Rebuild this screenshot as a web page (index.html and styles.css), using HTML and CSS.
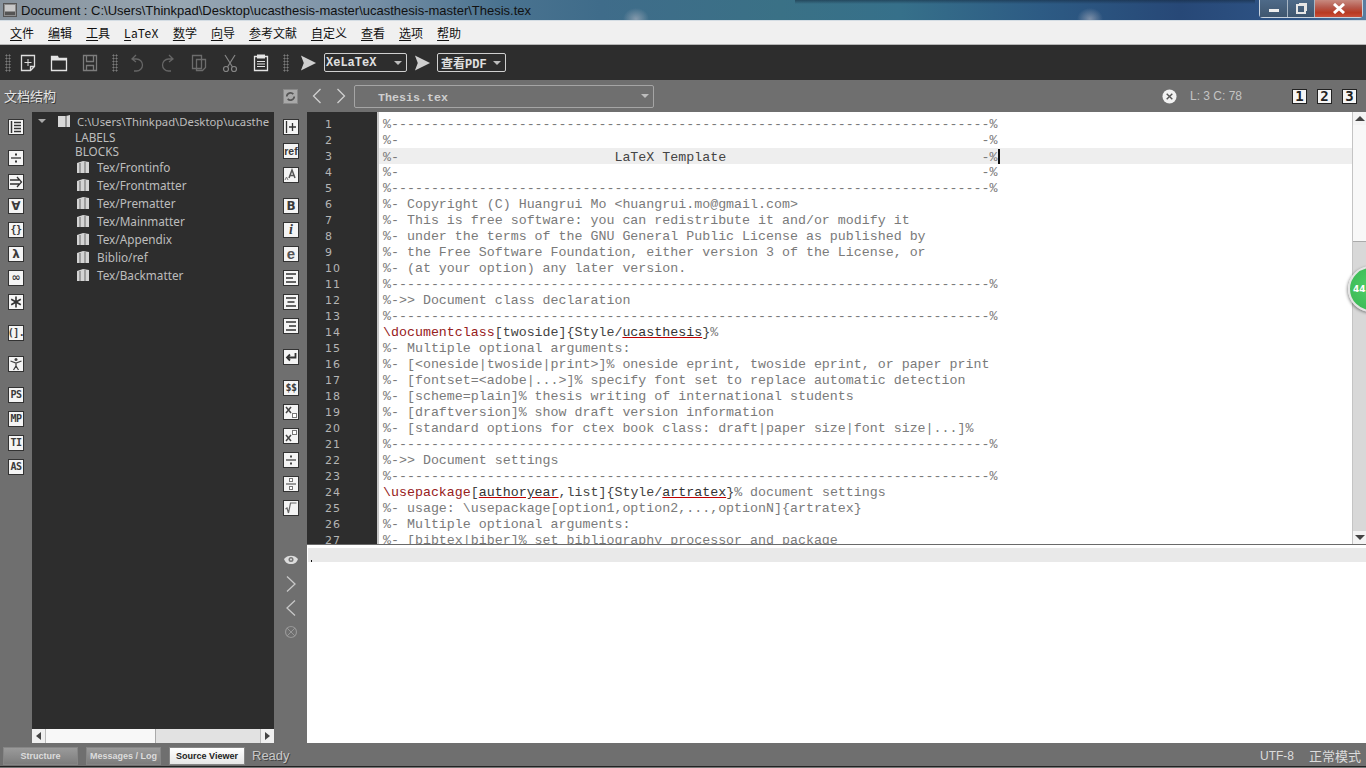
FILE: index.html
```html
<!DOCTYPE html>
<html>
<head>
    <title>Document : Thesis.tex</title>
    <meta charset="utf-8">
    <link rel="stylesheet" href="styles.css">
</head>
<body>
<div class="app">
    <div class="titlebar">
        <svg class="app-icon" width="14" height="14" viewBox="0 0 14 14"><rect x="0.5" y="0.5" width="13" height="13" fill="#8d8d8d" stroke="#555"/><rect x="2" y="2" width="10" height="6" fill="#c8c8c8"/><rect x="2" y="9" width="10" height="3" fill="#555"/></svg>
        <span class="title-text">Document : C:\Users\Thinkpad\Desktop\ucasthesis-master\ucasthesis-master\Thesis.tex</span>
        <div class="win-btns">
            <div class="win-btn win-min"><span class="min-bar"></span></div>
            <div class="win-btn win-max"><span class="max-box"></span></div>
            <div class="win-btn win-close">
                <svg width="14" height="11" viewBox="0 0 14 11"><path d="M2 1L12 10M12 1L2 10" stroke="#fff" stroke-width="3"/></svg>
            </div>
        </div>
    </div>

    <div class="menubar">
        <span class="menu-item"><u>文</u>件</span>
        <span class="menu-item"><u>编</u>辑</span>
        <span class="menu-item"><u>工</u>具</span>
        <span class="menu-item menu-latin"><u>L</u>aTeX</span>
        <span class="menu-item"><u>数</u>学</span>
        <span class="menu-item"><u>向</u>导</span>
        <span class="menu-item"><u>参</u>考文献</span>
        <span class="menu-item"><u>自</u>定义</span>
        <span class="menu-item"><u>查</u>看</span>
        <span class="menu-item"><u>选</u>项</span>
        <span class="menu-item"><u>帮</u>助</span>
    </div>

    <div class="toolbar">
        <span class="grip grip-first"></span>
        <svg class="tool" viewBox="0 0 20 20"><path d="M3.500 2.500h13v11l-4 4h-9z M12.500 17.500v-4h4" fill="none" stroke="#ddd" stroke-width="1.300"/><path d="M10 6v7M6.500 9.500h7" stroke="#ddd"/></svg>
        <svg class="tool" viewBox="0 0 20 20"><path d="M2.500 3.500h6l1 2h8v12h-15z" fill="none" stroke="#e4e4e4" stroke-width="1.300"/><path d="M2.500 3.500h6l1 2h8v2h-15z" fill="#e4e4e4"/></svg>
        <svg class="tool" viewBox="0 0 20 20"><path d="M3.500 2.500h13v15h-13z M6.500 2.500v6h7v-6 M6.500 17.500v-5h7v5" fill="none" stroke="#7c7c7c" stroke-width="1.300"/></svg>
        <span class="grip"></span>
        <svg class="tool" viewBox="0 0 20 20"><path d="M9 2L5 6l4 3M5 6h4.500a5 5 0 0 1 0 12H7" fill="none" stroke="#666" stroke-width="1.300"/></svg>
        <svg class="tool" viewBox="0 0 20 20"><path d="M11 2l4 4-4 3M15 6h-4.500a5 5 0 0 0 0 12H13" fill="none" stroke="#666" stroke-width="1.300"/></svg>
        <svg class="tool" viewBox="0 0 20 20"><path d="M3.500 2.500h9v13h-9z M7.500 6.500h9v8l-3 3h-6z" fill="none" stroke="#6c6c6c" stroke-width="1.300"/></svg>
        <svg class="tool" viewBox="0 0 20 20"><circle cx="6" cy="16" r="2.500" fill="none" stroke="#858585" stroke-width="1.200"/><circle cx="14" cy="16" r="2.500" fill="none" stroke="#858585" stroke-width="1.200"/><path d="M5 2l7.500 12M15 2L7.500 14" stroke="#858585" stroke-width="1.200"/></svg>
        <svg class="tool" viewBox="0 0 20 20"><path d="M3.500 3.500h13v14h-13z" fill="none" stroke="#e4e4e4" stroke-width="1.300"/><rect x="6" y="1.500" width="8" height="4" fill="#e4e4e4"/><path d="M6 8.500h8M6 11h8M6 13.500h8" stroke="#e4e4e4"/></svg>
        <span class="grip"></span>
        <svg class="run-arrow" viewBox="0 0 18 16"><path d="M1 0l16 8-16 8 3-8z" fill="#cfcfcf"/></svg>
        <div class="combo combo-compile"><span>XeLaTeX</span><i class="combo-arrow"></i></div>
        <svg class="run-arrow" viewBox="0 0 18 16"><path d="M1 0l16 8-16 8 3-8z" fill="#cfcfcf"/></svg>
        <div class="combo combo-view"><span>查看PDF</span><i class="combo-arrow"></i></div>
    </div>

    <div class="main">
        <div class="structure">
            <div class="panel-head">文档结构</div>
            <div class="structure-body">
                <div class="side-rail">
                    <div class="icon-col">
                        <div class="ibox gap-b"><svg viewBox="0 0 14 14"><path d="M2.500 1v12" stroke="#333" stroke-width="1.500"/><path d="M5 2.500h7M5 5.500h7M5 8.500h7M5 11.500h7" stroke="#333" stroke-width="1.500"/></svg></div>
                        <div class="ibox"><svg viewBox="0 0 14 14"><path d="M2 7h10" stroke="#333" stroke-width="1.300"/><rect x="6" y="2.500" width="2" height="2" fill="#333"/><rect x="6" y="9.500" width="2" height="2" fill="#333"/></svg></div>
                        <div class="ibox"><svg viewBox="0 0 14 14"><path d="M1 5h9M1 9h9M8 2l4.500 5L8 12" fill="none" stroke="#333" stroke-width="1.300"/></svg></div>
                        <div class="ibox sym">∀</div>
                        <div class="ibox sym small">{}</div>
                        <div class="ibox sym">λ</div>
                        <div class="ibox sym wide">∞</div>
                        <div class="ibox"><svg viewBox="0 0 14 14"><path d="M7 1.500v11M2.200 4.200l9.600 5.600M11.800 4.200l-9.600 5.600" stroke="#333" stroke-width="1.600"/></svg></div>
                        <div class="ibox sym small gap-t">(].</div>
                        <div class="ibox gap-t"><svg viewBox="0 0 14 14"><circle cx="7" cy="2.500" r="1.500" fill="#444"/><path d="M1.500 4l5.500 2 5.500-2M7 6v3M7 9l-2.500 4M7 9l2.500 4" fill="none" stroke="#444" stroke-width="1.300"/></svg></div>
                        <div class="ibox sym small gap-t">PS</div>
                        <div class="ibox sym small">MP</div>
                        <div class="ibox sym small">TI</div>
                        <div class="ibox sym small">AS</div>
                    </div>
                </div>
                <div class="tree">
                    <div class="tree-body">
                        <div class="tree-root">
                            <i class="tree-arrow"></i>
                            <svg class="doc-icon" viewBox="0 0 14 14"><path d="M1 2h8l4-1v12H1z" fill="#d8d8d8"/><path d="M9 2v11" stroke="#555"/></svg>
                            <span class="root-path">C:\Users\Thinkpad\Desktop\ucasthe</span>
                        </div>
                        <div class="tree-label first">LABELS</div>
                        <div class="tree-label">BLOCKS</div>
                        <div class="tree-item"><svg class="doc-icon" viewBox="0 0 14 14"><path d="M1 3l6-2 6 1v11H1z" fill="#d4d4d4"/><path d="M4 3v10M9 2v11" stroke="#666"/></svg>Tex/Frontinfo</div>
                        <div class="tree-item"><svg class="doc-icon" viewBox="0 0 14 14"><path d="M1 3l6-2 6 1v11H1z" fill="#d4d4d4"/><path d="M4 3v10M9 2v11" stroke="#666"/></svg>Tex/Frontmatter</div>
                        <div class="tree-item"><svg class="doc-icon" viewBox="0 0 14 14"><path d="M1 3l6-2 6 1v11H1z" fill="#d4d4d4"/><path d="M4 3v10M9 2v11" stroke="#666"/></svg>Tex/Prematter</div>
                        <div class="tree-item"><svg class="doc-icon" viewBox="0 0 14 14"><path d="M1 3l6-2 6 1v11H1z" fill="#d4d4d4"/><path d="M4 3v10M9 2v11" stroke="#666"/></svg>Tex/Mainmatter</div>
                        <div class="tree-item"><svg class="doc-icon" viewBox="0 0 14 14"><path d="M1 3l6-2 6 1v11H1z" fill="#d4d4d4"/><path d="M4 3v10M9 2v11" stroke="#666"/></svg>Tex/Appendix</div>
                        <div class="tree-item"><svg class="doc-icon" viewBox="0 0 14 14"><path d="M1 3l6-2 6 1v11H1z" fill="#d4d4d4"/><path d="M4 3v10M9 2v11" stroke="#666"/></svg>Biblio/ref</div>
                        <div class="tree-item"><svg class="doc-icon" viewBox="0 0 14 14"><path d="M1 3l6-2 6 1v11H1z" fill="#d4d4d4"/><path d="M4 3v10M9 2v11" stroke="#666"/></svg>Tex/Backmatter</div>
                    </div>
                    <div class="hscroll">
                        <span class="hs-btn"><i class="tri-left"></i></span>
                        <span class="hs-track"><span class="hs-thumb"></span></span>
                        <span class="hs-btn"><i class="tri-right"></i></span>
                    </div>
                </div>
            </div>
        </div>

        <div class="tool-rail">
            <svg class="rail-sync" viewBox="0 0 16 16"><rect x="0.500" y="0.500" width="15" height="15" fill="#a9a9a9" stroke="#8a8a8a"/><path d="M4 8a4 4 0 0 1 7-2.500M12 8a4 4 0 0 1-7 2.500" fill="none" stroke="#555" stroke-width="1.800"/></svg>
            <div class="icon-col">
                <div class="ibox"><svg viewBox="0 0 14 14"><path d="M2.500 1v12" stroke="#333" stroke-width="1.300"/><path d="M8.500 3v8M5 7h7" stroke="#333" stroke-width="1.300"/></svg></div>
                <div class="ibox sym ref">ref</div>
                <div class="ibox gap-b"><svg viewBox="0 0 14 14"><path d="M1 12l1.500-3 1.500 3" fill="none" stroke="#777"/><path d="M5 10l3-8 3 8M6 7.500h4" fill="none" stroke="#555" stroke-width="1.500"/></svg></div>
                <div class="ibox sym">B</div>
                <div class="ibox sym serif">i</div>
                <div class="ibox sym big-e">e</div>
                <div class="ibox"><svg viewBox="0 0 14 14"><path d="M2 3h10M2 7h7M2 11h10" stroke="#333" stroke-width="1.500"/></svg></div>
                <div class="ibox"><svg viewBox="0 0 14 14"><path d="M2 3h10M3.500 7h7M2 11h10" stroke="#333" stroke-width="1.500"/></svg></div>
                <div class="ibox gap-b"><svg viewBox="0 0 14 14"><path d="M2 3h10M5 7h7M2 11h10" stroke="#333" stroke-width="1.500"/></svg></div>
                <div class="ibox gap-b"><svg viewBox="0 0 14 14"><path d="M11.500 3v4.500H3M6 4.500L3 7.500l3 3" fill="none" stroke="#333" stroke-width="1.800"/></svg></div>
                <div class="ibox sym small">$$</div>
                <div class="ibox"><svg viewBox="0 0 14 14"><path d="M2 2l5 6M7 2L2 8" stroke="#444" stroke-width="1.500"/><rect x="8.500" y="8.500" width="4" height="4" fill="#fff" stroke="#777"/></svg></div>
                <div class="ibox"><svg viewBox="0 0 14 14"><path d="M2 6l5 6M7 6l-5 6" stroke="#444" stroke-width="1.500"/><rect x="8.500" y="1.500" width="4" height="4" fill="#fff" stroke="#777"/></svg></div>
                <div class="ibox"><svg viewBox="0 0 14 14"><path d="M2 7h10" stroke="#444" stroke-width="1.300"/><rect x="6" y="2.500" width="2" height="2" fill="#444"/><rect x="6" y="9.500" width="2" height="2" fill="#444"/></svg></div>
                <div class="ibox"><svg viewBox="0 0 14 14"><path d="M2 7h10" stroke="#666" stroke-width="1.300"/><rect x="5.500" y="1.500" width="3" height="3" fill="#fff" stroke="#777"/><rect x="5.500" y="9.500" width="3" height="3" fill="#fff" stroke="#777"/></svg></div>
                <div class="ibox"><svg viewBox="0 0 14 14"><path d="M1.500 8l1.500-1 1.500 5 2-10h6" fill="none" stroke="#666" stroke-width="1.200"/></svg></div>
            </div>
            <div class="log-tools">
                <svg viewBox="0 0 16 16"><path d="M1 7c3-4.500 11-4.500 14 0-1 3-3 5-7 5s-6-2-7-5z" fill="#ddd"/><circle cx="8" cy="7.500" r="2.500" fill="#777"/><circle cx="8" cy="7.500" r="1" fill="#ddd"/></svg>
                <svg viewBox="0 0 16 16"><path d="M4 0.500L12 8l-8 7.500" fill="none" stroke="#c8c8c8" stroke-width="1.300"/></svg>
                <svg viewBox="0 0 16 16"><path d="M12 0.500L4 8l8 7.500" fill="none" stroke="#c8c8c8" stroke-width="1.300"/></svg>
                <svg viewBox="0 0 16 16"><circle cx="8" cy="8" r="5.500" fill="none" stroke="#979797" stroke-width="1.200"/><path d="M4 4l8 8M12 4l-8 8" stroke="#979797"/></svg>
            </div>
        </div>

        <div class="work">
            <div class="tabbar">
                <svg class="nav-arrow" viewBox="0 0 10 16"><path d="M8.500 1L1.500 8l7 7" fill="none" stroke="#d0d0d0" stroke-width="1.300"/></svg>
                <svg class="nav-arrow" viewBox="0 0 10 16"><path d="M1.500 1l7 7-7 7" fill="none" stroke="#d0d0d0" stroke-width="1.300"/></svg>
                <div class="doc-combo"><span class="doc-name">Thesis.tex</span><i class="combo-arrow"></i></div>
                <div class="tab-right">
                    <svg class="close-doc" viewBox="0 0 16 16"><circle cx="8" cy="8" r="7.500" fill="#f2f2f2"/><path d="M5 5l6 6M11 5l-6 6" stroke="#555" stroke-width="1.500"/></svg>
                    <span class="cursor-pos">L: 3 C: 78</span>
                    <div class="pane-btns">
                        <span class="pane-btn">1</span>
                        <span class="pane-btn">2</span>
                        <span class="pane-btn">3</span>
                    </div>
                </div>
            </div>

            <div class="editor">
                <div class="gutter">
                    <div>1</div><div>2</div><div>3</div><div>4</div><div>5</div><div>6</div><div>7</div><div>8</div><div>9</div><div>10</div><div>11</div><div>12</div><div>13</div><div>14</div><div>15</div><div>16</div><div>17</div><div>18</div><div>19</div><div>20</div><div>21</div><div>22</div><div>23</div><div>24</div><div>25</div><div>26</div><div>27</div>
                </div>
                <div class="code">
                    <div class="line">%---------------------------------------------------------------------------%</div>
                    <div class="line">%-                                                                         -%</div>
                    <div class="line current">%-                           <span class="plain">LaTeX Template</span>                                -%<span class="caret"></span></div>
                    <div class="line">%-                                                                         -%</div>
                    <div class="line">%---------------------------------------------------------------------------%</div>
                    <div class="line">%- Copyright (C) Huangrui Mo &lt;huangrui.mo@gmail.com&gt;</div>
                    <div class="line">%- This is free software: you can redistribute it and/or modify it</div>
                    <div class="line">%- under the terms of the GNU General Public License as published by</div>
                    <div class="line">%- the Free Software Foundation, either version 3 of the License, or</div>
                    <div class="line">%- (at your option) any later version.</div>
                    <div class="line">%---------------------------------------------------------------------------%</div>
                    <div class="line">%->> Document class declaration</div>
                    <div class="line">%---------------------------------------------------------------------------%</div>
                    <div class="line"><span class="cmd">\documentclass</span><span class="plain">[twoside]{Style/<span class="link">ucasthesis</span>}</span>%</div>
                    <div class="line">%- Multiple optional arguments:</div>
                    <div class="line">%- [&lt;oneside|twoside|print&gt;]% oneside eprint, twoside eprint, or paper print</div>
                    <div class="line">%- [fontset=&lt;adobe|...&gt;]% specify font set to replace automatic detection</div>
                    <div class="line">%- [scheme=plain]% thesis writing of international students</div>
                    <div class="line">%- [draftversion]% show draft version information</div>
                    <div class="line">%- [standard options for ctex book class: draft|paper size|font size|...]%</div>
                    <div class="line">%---------------------------------------------------------------------------%</div>
                    <div class="line">%->> Document settings</div>
                    <div class="line">%---------------------------------------------------------------------------%</div>
                    <div class="line"><span class="cmd">\usepackage</span><span class="plain">[<span class="link">authoryear</span>,list]{Style/<span class="link">artratex</span>}</span>% document settings</div>
                    <div class="line">%- usage: \usepackage[option1,option2,...,optionN]{artratex}</div>
                    <div class="line">%- Multiple optional arguments:</div>
                    <div class="line">%- [bibtex|biber]% set bibliography processor and package</div>
                </div>
                <div class="vscroll">
                    <span class="vs-btn"><i class="tri-up"></i></span>
                    <span class="vs-thumb"></span>
                    <span class="vs-track"></span>
                    <span class="vs-btn"><i class="tri-down"></i></span>
                </div>
                <div class="float-badge">44</div>
            </div>
            <div class="log-pane">
                <div class="log-line"><span class="log-caret"></span></div>
            </div>
        </div>
    </div>

    <div class="statusbar">
        <span class="status-tab">Structure</span>
        <span class="status-tab">Messages / Log</span>
        <span class="status-tab active">Source Viewer</span>
        <span class="status-ready">Ready</span>
        <span class="status-right">UTF-8</span>
        <span class="status-mode">正常模式</span>
    </div>
</div>
</body>
</html>
```

FILE: styles.css
```css
html, body {
    margin: 0;
    padding: 0;
    overflow: hidden;
}
body {
    font-family: "Liberation Sans", "Noto Sans CJK SC", sans-serif;
    background-color: #777;
}
.app {
    width: 1366px;
    height: 768px;
    display: flex;
    flex-direction: column;
    overflow: hidden;
}

/* title bar */
.titlebar {
    height: 21px;
    flex: none;
    display: flex;
    align-items: center;
    padding-left: 3px;
    box-sizing: border-box;
    border-bottom: 1px solid #d4dde4;
    background:
        radial-gradient(ellipse 13px 11px at 636px 19px, rgba(190,190,200,0.55), transparent),
        radial-gradient(ellipse 13px 11px at 1090px 19px, rgba(190,190,200,0.55), transparent),
        linear-gradient(rgba(20,40,60,0.55) 0, transparent 4px) no-repeat 795px 0 / 460px 100%,
        linear-gradient(90deg, #87929c 0, #97a6b2 180px, #7b92a7 360px, #4a7390 500px, #3f6c8a 600px, #3a7186 780px, #36708a 900px, #2d5b84 1040px, #274877 1180px, #2f5587 1300px, #5a7ea0 1366px);
}
.app-icon {
    margin-right: 4px;
}
.title-text {
    font-size: 13px;
    color: #111;
    white-space: nowrap;
}
.win-btns {
    margin-left: auto;
    margin-right: 3px;
    display: flex;
    height: 18px;
    align-self: flex-start;
    border: 1px solid #c9d3de;
    border-top: none;
    border-radius: 0 0 4px 4px;
    box-sizing: border-box;
}
.win-btn {
    display: flex;
    align-items: center;
    justify-content: center;
    height: 100%;
}
.win-min {
    width: 27px;
    background: linear-gradient(#4e6a88, #3f566f);
    border-right: 1px solid #a8b6c4;
}
.win-max {
    width: 26px;
    background: linear-gradient(#4e6a88, #3f566f);
    border-right: 1px solid #a8b6c4;
}
.win-close {
    width: 47px;
    background: linear-gradient(#c78a80 0, #b5574a 45%, #b83a22 75%, #c9503a 100%);
}
.min-bar {
    width: 10px;
    height: 3px;
    background-color: #eee;
    margin-top: 3px;
}
.max-box {
    width: 6px;
    height: 6px;
    border: 2px solid #e6e6e6;
    box-shadow: 2px -2px 0 -1px #e6e6e6;
}

/* menu */
.menubar {
    height: 23px;
    flex: none;
    display: flex;
    align-items: center;
    padding-left: 3px;
    background-color: #f0f0f0;
    font-family: "Noto Sans CJK SC", sans-serif;
    font-size: 12px;
    color: #111;
}
.menu-item {
    padding: 0 7px;
}
.menu-latin {
    letter-spacing: 0.4px;
}
.menu-item u {
    text-underline-offset: 2px;
}

/* toolbar */
.toolbar {
    height: 36px;
    flex: none;
    display: flex;
    align-items: center;
    padding-left: 4px;
    background-color: #2d2d2d;
    border-top: 1px solid #b5b5b5;
    box-sizing: border-box;
}
.grip {
    width: 6px;
    height: 18px;
    margin: 0 9px 0 1px;
    background-image: radial-gradient(#7b7b7b 45%, transparent 50%);
    background-size: 3px 3px;
}
.grip-first {
    margin-right: 7px;
}
.tool {
    width: 20px;
    height: 20px;
    margin-right: 11px;
}
.run-arrow {
    width: 17px;
    height: 16px;
    margin-left: 2px;
}
.combo {
    height: 19px;
    box-sizing: border-box;
    border: 1px solid #cfcfcf;
    border-radius: 2px;
    display: flex;
    align-items: center;
    justify-content: space-between;
    color: #e0e0e0;
    font-family: "Liberation Mono", "Noto Sans CJK SC", monospace;
    font-size: 12px;
    font-weight: bold;
    padding: 0 4px 0 1px;
}
.combo-compile {
    width: 83px;
    margin: 0 5px 0 7px;
}
.combo-view {
    width: 69px;
    margin-left: 6px;
    padding-left: 3px;
}
.combo-arrow {
    width: 0;
    height: 0;
    border-left: 4px solid transparent;
    border-right: 4px solid transparent;
    border-top: 4px solid #bdbdbd;
}

/* main */
.main {
    flex: 1;
    min-height: 0;
    display: flex;
    background-color: #6f6f6f;
}
.structure {
    width: 274px;
    flex: none;
    display: flex;
    flex-direction: column;
}
.panel-head {
    height: 32px;
    flex: none;
    line-height: 31px;
    padding-left: 4px;
    font-family: "Noto Sans CJK SC", sans-serif;
    font-size: 13px;
    color: #e4e4e4;
    text-shadow: 1px 1px 0 #3a3a3a;
}
.structure-body {
    flex: 1;
    min-height: 0;
    display: flex;
}
.side-rail {
    width: 32px;
    flex: none;
    padding: 7px 0 0 8px;
    box-sizing: border-box;
}
.icon-col {
    display: flex;
    flex-direction: column;
    gap: 8px;
}
.ibox {
    width: 16px;
    height: 16px;
    box-sizing: border-box;
    border: 1px solid #333;
    background-color: #f4f4f4;
    display: flex;
    align-items: center;
    justify-content: center;
    color: #3a3a3a;
    font-family: "DejaVu Sans", sans-serif;
    font-weight: bold;
    font-size: 12px;
    line-height: 14px;
    overflow: hidden;
}
.ibox svg {
    width: 14px;
    height: 14px;
}
.ibox.small {
    font-size: 10px;
    letter-spacing: -0.5px;
    font-family: "DejaVu Sans Mono", monospace;
}
.ibox.ref {
    font-family: "Liberation Sans", sans-serif;
    font-size: 10.5px;
}
.ibox.wide {
    font-size: 11px;
}
.ibox.big-e {
    font-family: "Liberation Sans", sans-serif;
    font-size: 15px;
    color: #555;
}
.ibox.serif {
    font-family: "Liberation Serif", serif;
    font-style: italic;
    font-size: 14px;
}
.gap-b {
    margin-bottom: 7px;
}
.gap-t {
    margin-top: 7px;
}

.tree {
    width: 242px;
    flex: none;
    display: flex;
    flex-direction: column;
    background-color: #2d2d2d;
}
.tree-body {
    flex: 1;
    min-height: 0;
    overflow: hidden;
    padding-top: 1px;
    font-family: "Noto Sans", sans-serif;
    font-size: 11.75px;
    color: #bdbdbd;
    white-space: nowrap;
}
.tree-root {
    display: flex;
    align-items: center;
    height: 14px;
    padding-top: 1px;
}
.root-path {
    font-size: 11.3px;
}
.tree-arrow {
    width: 0;
    height: 0;
    margin-left: 6px;
    margin-right: 11px;
    border-left: 4px solid transparent;
    border-right: 4px solid transparent;
    border-top: 4px solid #aaa;
}
.doc-icon {
    width: 14px;
    height: 14px;
    flex: none;
    margin-right: 6px;
}
.tree-label {
    height: 14px;
    line-height: 14px;
    padding-left: 43px;
}
.tree-label.first {
    margin-top: 2px;
}
.tree-item {
    height: 18px;
    display: flex;
    align-items: center;
    padding-left: 44px;
}
.tree-item .doc-icon {
    margin-right: 7px;
}
.hscroll {
    height: 14px;
    flex: none;
    display: flex;
    background-color: #f4f4f4;
}
.hs-btn {
    width: 13px;
    flex: none;
    display: flex;
    align-items: center;
    justify-content: center;
    background-color: #f0f0f0;
}
.hs-track {
    flex: 1;
    background-color: #e2e2e2;
    border-left: 1px solid #bbb;
    border-right: 1px solid #bbb;
}
.hs-thumb {
    display: block;
    width: 109px;
    height: 100%;
    background-color: #f8f8f8;
    border-right: 1px solid #aaa;
}
.tri-left, .tri-right {
    width: 0;
    height: 0;
    border-top: 4px solid transparent;
    border-bottom: 4px solid transparent;
}
.tri-left {
    border-right: 5px solid #444;
}
.tri-right {
    border-left: 5px solid #444;
}

.tool-rail {
    width: 33px;
    flex: none;
    display: flex;
    flex-direction: column;
    padding: 9px 0 0 9px;
    box-sizing: border-box;
}
.rail-sync {
    width: 15px;
    height: 15px;
    margin-bottom: 15px;
}
.log-tools {
    margin-top: 36px;
    display: flex;
    flex-direction: column;
    gap: 8px;
}
.log-tools svg {
    width: 16px;
    height: 16px;
    display: block;
}

/* editor area */
.work {
    flex: 1;
    min-width: 0;
    display: flex;
    flex-direction: column;
}
.tabbar {
    height: 32px;
    flex: none;
    display: flex;
    align-items: center;
    padding-left: 5px;
}
.nav-arrow {
    width: 10px;
    height: 16px;
    margin-right: 14px;
}
.doc-combo {
    width: 300px;
    height: 23px;
    margin-left: -6px;
    box-sizing: border-box;
    border: 1px solid #a5a5a5;
    border-radius: 2px;
    display: flex;
    align-items: center;
    justify-content: space-between;
    padding: 0 4px 0 23px;
    font-family: "Liberation Mono", monospace;
    font-size: 11.67px;
    font-weight: bold;
    color: #cfcfcf;
}
.doc-name {
    margin-top: 3px;
}
.tab-right {
    margin-left: auto;
    display: flex;
    align-items: center;
}
.close-doc {
    width: 15px;
    height: 15px;
    margin-right: 13px;
}
.cursor-pos {
    width: 102px;
    font-size: 12px;
    color: #c4c4c4;
}
.pane-btns {
    display: flex;
    gap: 10px;
    margin-right: 9px;
}
.pane-btn {
    width: 15px;
    height: 15px;
    box-sizing: border-box;
    border: 1px solid #222;
    background-color: #f5f5f5;
    color: #222;
    font-family: "DejaVu Sans Mono", monospace;
    font-weight: bold;
    font-size: 14px;
    line-height: 13px;
    text-align: center;
}
.editor {
    height: 432px;
    flex: none;
    display: flex;
    position: relative;
    background-color: #fff;
    border-bottom: 1px solid #6a6a6a;
    overflow: hidden;
}
.gutter {
    width: 70px;
    flex: none;
    background-color: #2d2d2d;
    border-right: 2px solid #c8c8c8;
    padding-top: 5px;
    font-family: "DejaVu Sans", sans-serif;
    font-size: 11px;
    letter-spacing: 1px;
    line-height: 16px;
    color: #b5b5b5;
    text-indent: 18px;
}
.code {
    flex: 1;
    min-width: 0;
    padding-top: 4px;
    font-family: "Liberation Mono", monospace;
    font-size: 13.3px;
    line-height: 16px;
    color: #7a7a7a;
}
.line {
    height: 16px;
    box-sizing: border-box;
    padding: 1px 0 0 4px;
    white-space: pre;
}
.line.current {
    background-color: #eeeeee;
}
.caret {
    display: inline-block;
    width: 2px;
    height: 15px;
    margin-left: 1px;
    vertical-align: -3px;
    background-color: #111;
}
.plain {
    color: #444;
}
.cmd {
    color: #962020;
}
.link {
    color: #333;
    text-decoration: underline;
    text-decoration-color: #c00000;
}
.vscroll {
    width: 14px;
    flex: none;
    display: flex;
    flex-direction: column;
    background-color: #e2e2e2;
    border-left: 1px solid #c4c4c4;
    box-sizing: border-box;
}
.vs-btn {
    height: 13px;
    flex: none;
    display: flex;
    align-items: center;
    justify-content: center;
    background-color: #f4f4f4;
}
.vs-thumb {
    height: 116px;
    flex: none;
    background-color: #f8f8f8;
    border-bottom: 1px solid #aaa;
}
.vs-track {
    flex: 1;
    background-color: #d8d8d8;
}
.tri-up, .tri-down {
    width: 0;
    height: 0;
    border-left: 5px solid transparent;
    border-right: 5px solid transparent;
}
.tri-up {
    border-bottom: 5px solid #444;
}
.tri-down {
    border-top: 5px solid #444;
}
.float-badge {
    position: absolute;
    left: 1041px;
    top: 154px;
    width: 46px;
    height: 46px;
    box-sizing: border-box;
    border-radius: 50%;
    border: 2px solid #e4e4e4;
    background: radial-gradient(circle at 50% 45%, #4fd068, #38b452);
    box-shadow: -1px 1px 3px rgba(0,0,0,0.4);
    color: #fff;
    font-family: "DejaVu Sans", sans-serif;
    font-weight: bold;
    font-size: 9px;
    line-height: 42px;
    padding-left: 3px;
}
.log-pane {
    flex: 1;
    min-height: 0;
    background-color: #fff;
    padding-top: 3px;
}
.log-line {
    height: 14px;
    margin-left: 1px;
    background-color: #e9e9e9;
    position: relative;
}
.log-caret {
    position: absolute;
    left: 3px;
    bottom: 0;
    width: 1px;
    height: 2px;
    background-color: #111;
}

/* status bar */
.statusbar {
    height: 24px;
    flex: none;
    margin-bottom: 1px;
    display: flex;
    align-items: center;
    box-sizing: border-box;
    padding: 2px 5px 0 3px;
    background-color: #6f6f6f;
    border-bottom: 1px solid #222;
    font-size: 9px;
    font-weight: bold;
    color: #dcdcdc;
}
.status-tab {
    height: 18px;
    width: 75px;
    box-sizing: border-box;
    margin-right: 8px;
    display: flex;
    align-items: center;
    justify-content: center;
    background: linear-gradient(#9a9a9a, #7d7d7d);
    border: 1px solid #868686;
    white-space: nowrap;
}
.status-tab.active {
    width: 76px;
    background: linear-gradient(#fff, #e6e6e6);
    color: #222;
    margin-right: 7px;
}
.status-ready {
    font-size: 13px;
    font-weight: normal;
    color: #c8c8c8;
    text-shadow: 1px 1px 0 #444;
}
.status-right {
    margin-left: auto;
    margin-right: 15px;
    font-size: 12px;
    font-weight: normal;
}
.status-mode {
    font-family: "Noto Sans CJK SC", sans-serif;
    font-size: 13px;
    font-weight: normal;
}
```
